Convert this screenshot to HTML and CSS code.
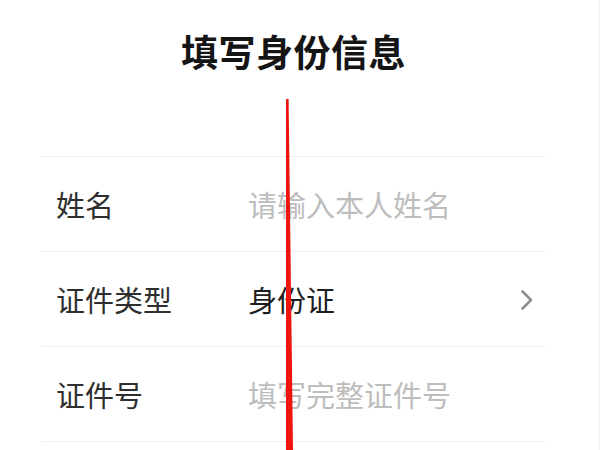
FILE: index.html
```html
<!DOCTYPE html>
<html lang="zh-CN">
<head>
<meta charset="utf-8">
<title>填写身份信息</title>
<link rel="stylesheet" href="styles.css">
</head>
<body>
<div class="page">
  <header class="header">
    <h1 class="title">填写身份信息</h1>
  </header>
  <div class="list">
    <div class="row">
      <span class="label">姓名</span>
      <span class="value placeholder">请输入本人姓名</span>
      <span class="arrow"></span>
    </div>
    <div class="row">
      <span class="label">证件类型</span>
      <span class="value">身份证</span>
      <span class="arrow">
        <svg width="14" height="22" viewBox="0 0 14 22"><path d="M2.5 2.5 L11 11 L2.5 19.5" fill="none" stroke="#8f8f8f" stroke-width="2.6" stroke-linecap="round" stroke-linejoin="round"/></svg>
      </span>
    </div>
    <div class="row">
      <span class="label">证件号</span>
      <span class="value placeholder">填写完整证件号</span>
      <span class="arrow"></span>
    </div>
    <div class="row"></div>
  </div>
  <svg class="mark" width="600" height="450" viewBox="0 0 600 450">
    <polygon points="286,99 288.6,99 293,450 286,450" fill="#f0140f"/>
  </svg>
</div>
</body>
</html>
```

FILE: styles.css
```css
html, body {
  margin: 0;
  padding: 0;
  background: #ffffff;
}

.page {
  position: relative;
  width: 600px;
  height: 450px;
  overflow: hidden;
  box-sizing: border-box;
  border-right: 1px solid #f2f2f2;
  font-family: "Noto Sans CJK SC", "Noto Sans", sans-serif;
}

.header {
  padding-top: 31px;
  height: 124px;
  box-sizing: border-box;
  text-align: center;
  margin-bottom: 32px;
}

.title {
  margin: 0;
  font-size: 37px;
  line-height: 40px;
  font-weight: 700;
  color: #151515;
  letter-spacing: 0.5px;
  padding-right: 12px;
}

.list {
  margin: 0 54px 0 42px;
  border-top: 1px solid #efefef;
}

.row {
  display: grid;
  grid-template-columns: 192px 1fr auto;
  align-items: center;
  height: 95px;
  box-sizing: border-box;
  padding: 0 11px 0 14px;
  border-bottom: 1px solid #efefef;
}

.label {
  font-size: 29px;
  color: #2e2e2e;
}

.value {
  font-size: 29px;
  color: #1e1e1e;
}

.placeholder {
  color: #bdbdbd;
}

.arrow {
  display: flex;
  align-items: center;
  padding-top: 2px;
}

.mark {
  position: absolute;
  left: 0;
  top: 0;
}
```
